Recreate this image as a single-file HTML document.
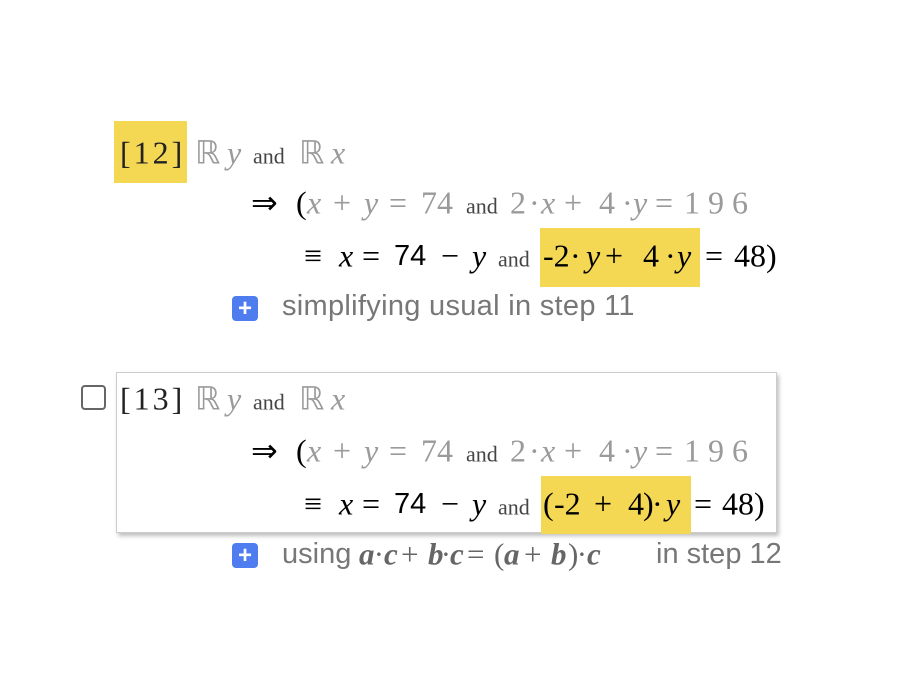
<!DOCTYPE html>
<html><head><meta charset="utf-8"><style>
body{margin:0;width:900px;height:700px;background:#fff;position:relative;overflow:hidden;font-family:"Liberation Serif",serif;}
.L{position:absolute;left:0;height:0;width:900px}
.L span{position:absolute;top:0;white-space:nowrap;line-height:1;font-size:32px;transform:translateY(-0.89em)}
.L span.a{font-size:22px;color:#444}
.L span.ss{font-family:"Liberation Sans",sans-serif;font-size:29px}
.L span.op{font-size:32px}
.L span.sg{font-family:"Liberation Sans",sans-serif;font-size:29px;color:#777}
.g{color:#9a9a9a}
.L span.i{font-style:italic}
.L span.bi{font-style:italic;font-weight:bold;color:#666;font-size:31px}
.L span.o{color:#666;font-size:31px}
.hl{position:absolute;background:#f4d854}
.plus{position:absolute;width:26px;height:25px;background:#4f7df0;border-radius:4px;color:#fff;font:bold 24px/25px "Liberation Sans",sans-serif;text-align:center}
</style></head><body>
<div class="hl" style="left:114px;top:121px;width:73px;height:62px"></div>
<div class="hl" style="left:540px;top:228px;width:160px;height:59px"></div>

<div class="L" style="top:165px">
<span style="left:120px;color:#222;letter-spacing:3px">[12]</span>
<span class="g" style="left:195px">ℝ</span><span class="g i" style="left:227px">y</span>
<span class="a" style="left:253px">and</span>
<span class="g" style="left:299px">ℝ</span><span class="g i" style="left:331px">x</span>
</div>
<div class="L" style="top:215px">
<span style="left:251px">⇒</span><span style="left:296px">(</span>
<span class="g i" style="left:307px">x</span><span class="g op" style="left:333px">+</span><span class="g i" style="left:364px">y</span><span class="g op" style="left:389px">=</span><span class="g" style="left:421px">74</span>
<span class="a" style="left:466px">and</span>
<span class="g" style="left:510px">2</span><span class="g" style="left:529px">·</span><span class="g i" style="left:541px">x</span><span class="g op" style="left:564px">+</span><span class="g" style="left:599px">4</span><span class="g" style="left:622px">·</span><span class="g i" style="left:633px">y</span><span class="g op" style="left:655px">=</span><span class="g" style="left:684px;letter-spacing:8px">196</span>
</div>
<div class="L" style="top:268px">
<span class="op" style="left:304px">≡</span><span class="i" style="left:339px">x</span><span class="op" style="left:362px">=</span><span class="ss" style="left:394px">74</span><span class="op" style="left:441px">−</span><span class="i" style="left:472px">y</span>
<span class="a" style="left:498px">and</span>
<span style="left:543px">-2</span><span style="left:570px">·</span><span class="i" style="left:586px">y</span><span class="op" style="left:605px">+</span><span style="left:643px">4</span><span style="left:665px">·</span><span class="i" style="left:677px">y</span><span class="op" style="left:705px">=</span><span style="left:734px">48)</span>
</div>
<div class="plus" style="left:232px;top:296px">+</div>
<div class="L" style="top:318px"><span class="sg" style="left:282px;letter-spacing:0.3px">simplifying usual in step 11</span></div>

<div style="position:absolute;left:116px;top:372px;width:659px;height:159px;border:1px solid #ccc;box-shadow:2px 3px 4px rgba(0,0,0,0.25)"></div>
<div style="position:absolute;left:81px;top:385px;width:21px;height:21px;border:2px solid #666;border-radius:4px"></div>
<div class="hl" style="left:541px;top:476px;width:150px;height:58px"></div>

<div class="L" style="top:411px">
<span style="left:120px;color:#222;letter-spacing:3px">[13]</span>
<span class="g" style="left:195px">ℝ</span><span class="g i" style="left:227px">y</span>
<span class="a" style="left:253px">and</span>
<span class="g" style="left:299px">ℝ</span><span class="g i" style="left:331px">x</span>
</div>
<div class="L" style="top:463px">
<span style="left:251px">⇒</span><span style="left:296px">(</span>
<span class="g i" style="left:307px">x</span><span class="g op" style="left:333px">+</span><span class="g i" style="left:364px">y</span><span class="g op" style="left:389px">=</span><span class="g" style="left:421px">74</span>
<span class="a" style="left:466px">and</span>
<span class="g" style="left:510px">2</span><span class="g" style="left:529px">·</span><span class="g i" style="left:541px">x</span><span class="g op" style="left:564px">+</span><span class="g" style="left:599px">4</span><span class="g" style="left:622px">·</span><span class="g i" style="left:633px">y</span><span class="g op" style="left:655px">=</span><span class="g" style="left:684px;letter-spacing:8px">196</span>
</div>
<div class="L" style="top:516px">
<span class="op" style="left:304px">≡</span><span class="i" style="left:339px">x</span><span class="op" style="left:362px">=</span><span class="ss" style="left:394px">74</span><span class="op" style="left:441px">−</span><span class="i" style="left:472px">y</span>
<span class="a" style="left:498px">and</span>
<span style="left:543px">(</span><span style="left:554px">-2</span><span class="op" style="left:594px">+</span><span style="left:628px">4</span><span style="left:643px">)</span><span style="left:652px">·</span><span class="i" style="left:666px">y</span><span class="op" style="left:694px">=</span><span style="left:722px">48)</span>
</div>
<div class="plus" style="left:232px;top:543px">+</div>
<div class="L" style="top:566px">
<span class="sg" style="left:282px">using</span>
<span class="bi" style="left:359px">a</span><span class="o" style="left:375px">∙</span><span class="bi" style="left:384px">c</span><span class="o" style="left:401px">+</span><span class="bi" style="left:428px">b</span><span class="o" style="left:442px">∙</span><span class="bi" style="left:450px">c</span><span class="o" style="left:467px">=</span><span class="o" style="left:494px">(</span><span class="bi" style="left:504px">a</span><span class="o" style="left:524px">+</span><span class="bi" style="left:551px">b</span><span class="o" style="left:568px">)</span><span class="o" style="left:578px">∙</span><span class="bi" style="left:587px">c</span>
<span class="sg" style="left:656px">in step 12</span>
</div>
</body></html>
